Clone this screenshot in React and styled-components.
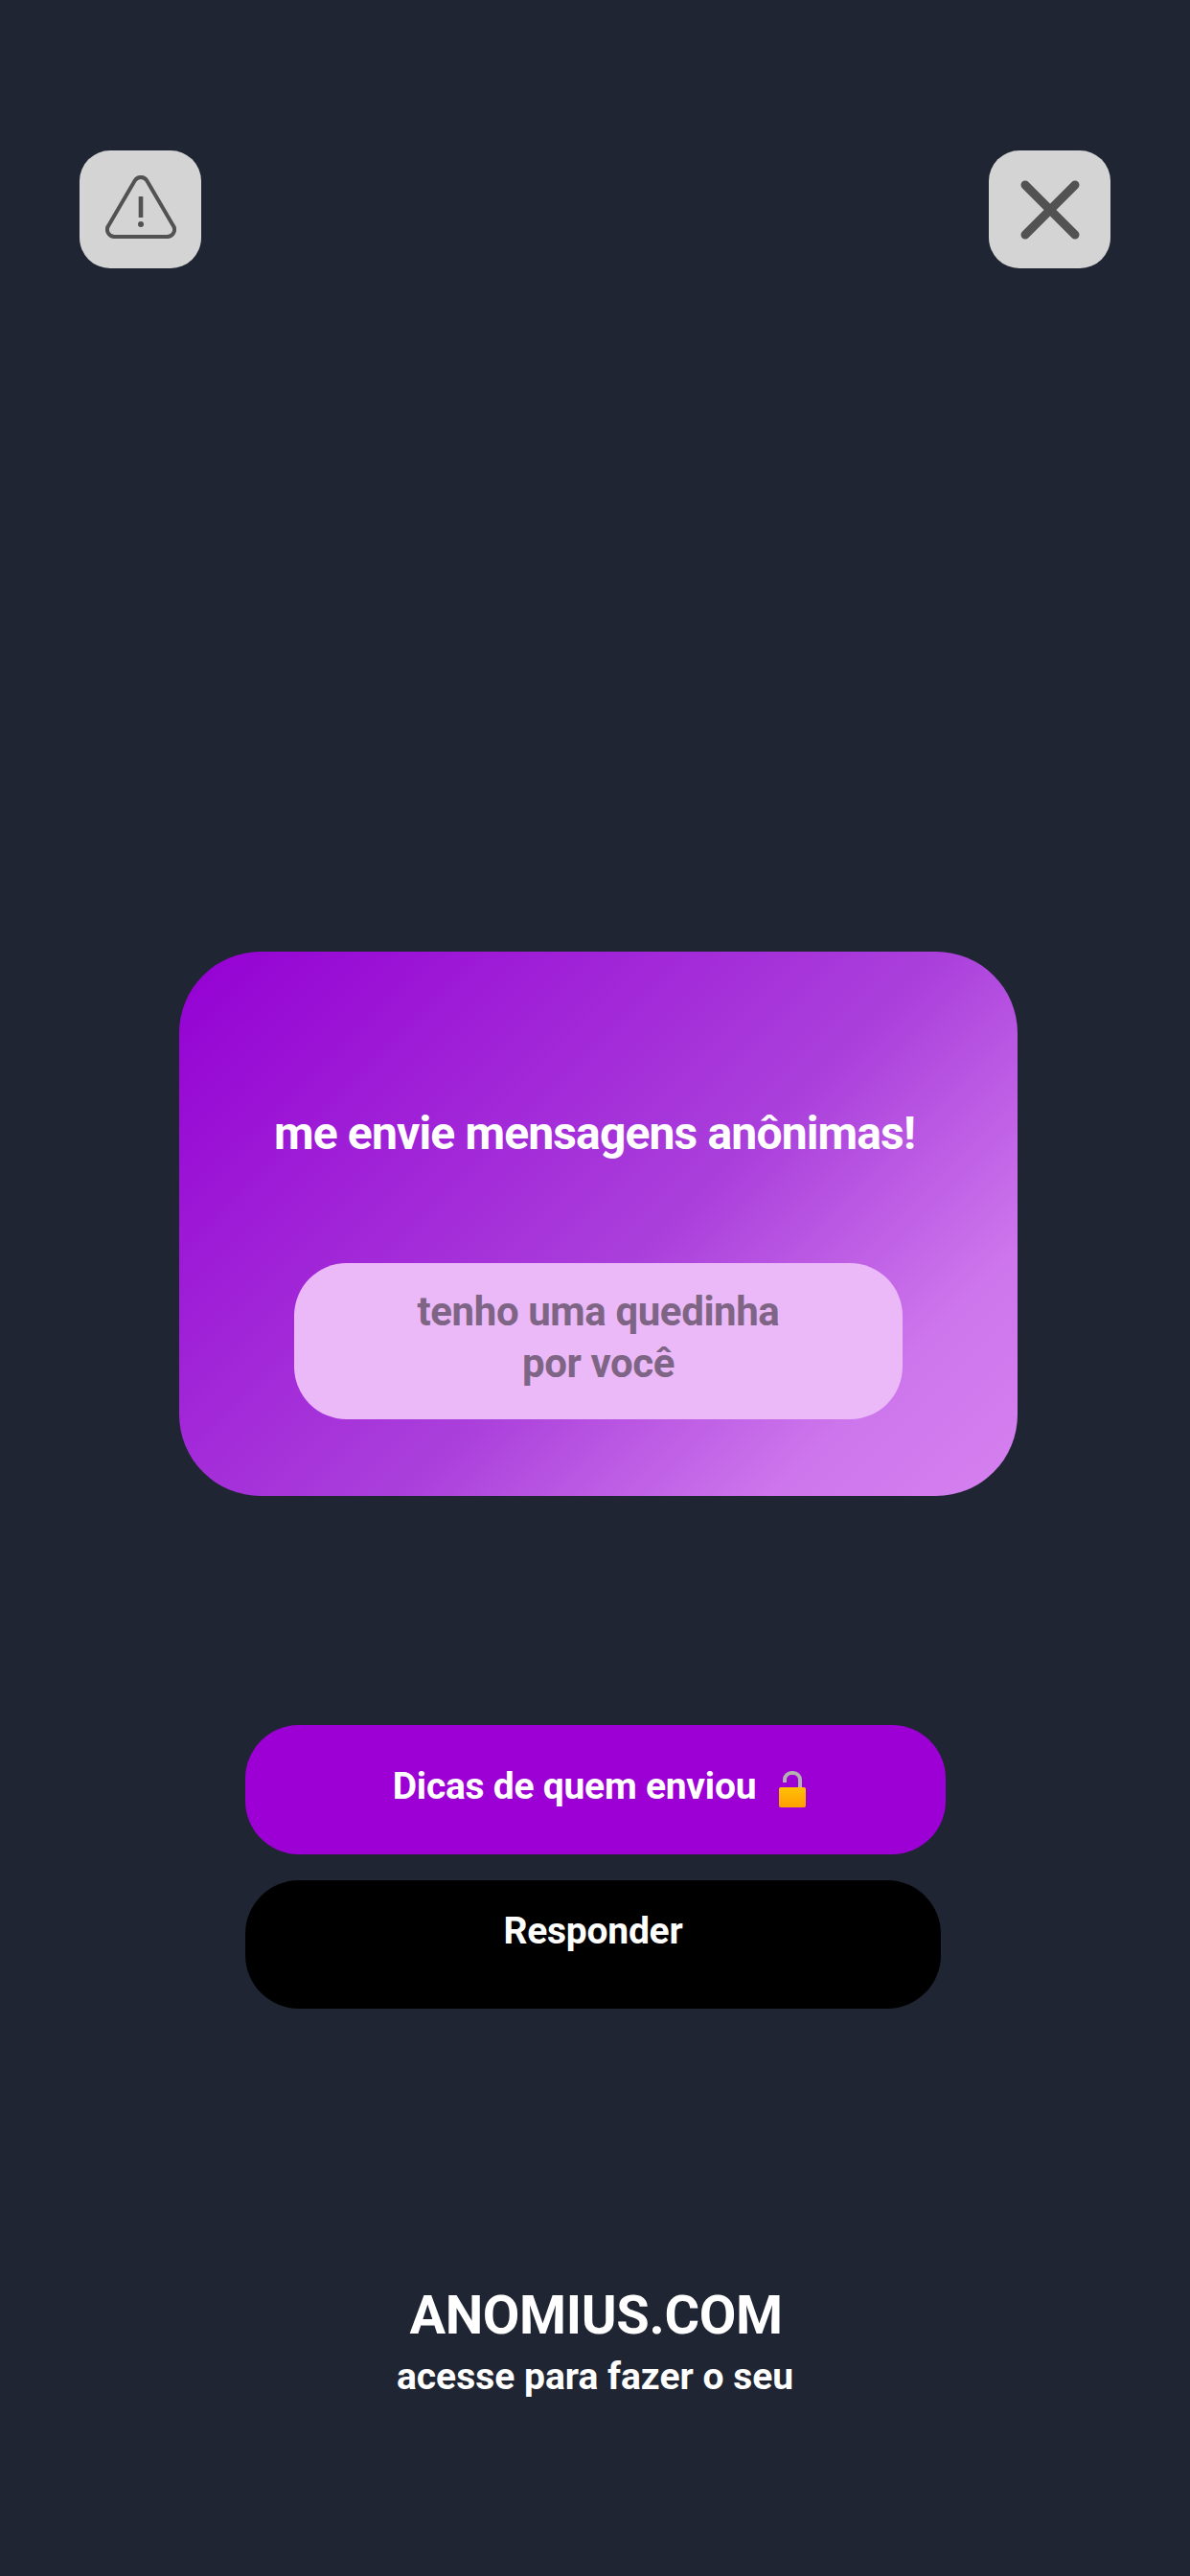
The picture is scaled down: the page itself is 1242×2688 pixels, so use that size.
import React from 'react';
import styled, { createGlobalStyle } from 'styled-components';

const GlobalStyle = createGlobalStyle`
  html, body {
    margin: 0;
    padding: 0;
    background: #1f2532;
  }
`;

const Page = styled.div`
  width: 1242px;
  height: 2688px;
  background: #1f2532;
  font-family: Roboto, "Liberation Sans", sans-serif;
  font-weight: 700;
  color: #fff;
  display: flex;
  flex-direction: column;
  align-items: flex-start;
  padding-top: 157px;
  box-sizing: border-box;
  overflow: hidden;
`;

const TopBar = styled.div`
  width: 100%;
  box-sizing: border-box;
  padding: 0 83px;
  display: flex;
  justify-content: space-between;
`;

const IconButton = styled.div`
  width: 127px;
  height: 123px;
  border-radius: 32px;
  background: #d4d4d4;
  display: flex;
  align-items: center;
  justify-content: center;
`;

const Card = styled.div`
  width: 875px;
  height: 568px;
  margin: 713px 0 0 187px;
  border-radius: 85px;
  background: linear-gradient(135deg, #9400d3 0%, #aa3fdb 55%, #cd75ec 82%, #d580f0 100%);
  display: flex;
  flex-direction: column;
  align-items: center;
  padding-top: 155px;
  box-sizing: border-box;
`;

const Title = styled.div`
  font-size: 48px;
  line-height: 70px;
  letter-spacing: -0.85px;
  white-space: nowrap;
  margin-right: 8px;
`;

const Prompt = styled.div`
  width: 635px;
  height: 163px;
  margin-top: 100px;
  border-radius: 55px;
  background: #ebb9f8;
  color: #7f6585;
  font-size: 42px;
  line-height: 54px;
  letter-spacing: -0.4px;
  text-align: center;
  padding-top: 24px;
  box-sizing: border-box;
`;

const Actions = styled.div`
  margin: 239px 0 0 256px;
  display: flex;
  flex-direction: column;
  align-items: flex-start;
  gap: 27px;
`;

const ActionButton = styled.div`
  width: ${p => p.$width}px;
  height: ${p => p.$height}px;
  border-radius: 56px;
  background: ${p => p.$bg};
  font-size: 39px;
  line-height: 50px;
  letter-spacing: -0.25px;
  display: flex;
  justify-content: center;
  gap: 24px;
  padding: ${p => p.$top}px 0 0 ${p => p.$left || 0}px;
  box-sizing: border-box;
`;

const Footer = styled.div`
  width: 100%;
  margin-top: 287px;
  display: flex;
  flex-direction: column;
  align-items: center;
`;

const Brand = styled.div`
  font-size: 56px;
  line-height: 66px;
  letter-spacing: -0.35px;
  margin-left: 2px;
`;

const Tagline = styled.div`
  font-size: 39px;
  line-height: 50px;
  margin-top: 6px;
`;

const LockSvg = styled.svg`
  margin-top: 9px;
`;

const WarningSvg = styled.svg`
  margin-bottom: 5px;
`;

const WarningIcon = () => (
  <WarningSvg width="74" height="66" viewBox="0 0 74 66" fill="none" stroke="#525252" strokeWidth="4" strokeLinejoin="round">
    <path d="M30.7 5.5 a7.3 7.3 0 0 1 12.6 0 L70.5 52 a7.5 7.5 0 0 1 -6.5 12 H10 a7.5 7.5 0 0 1 -6.5 -12 Z" />
    <path d="M37 22 V44" strokeWidth="4.6" />
    <circle cx="37" cy="51" r="3" fill="#525252" stroke="none" />
  </WarningSvg>
);

const CloseIcon = () => (
  <svg width="62" height="62" viewBox="0 0 62 62" fill="none" stroke="#525252" strokeWidth="9" strokeLinecap="round">
    <path d="M5 5 L57 57 M57 5 L5 57" />
  </svg>
);

const LockIcon = () => (
  <LockSvg width="28" height="38" viewBox="0 0 28 38">
    <defs>
      <linearGradient id="lockBody" x1="0" y1="0" x2="0" y2="1">
        <stop offset="0" stopColor="#ffc107" />
        <stop offset="1" stopColor="#ff9f00" />
      </linearGradient>
    </defs>
    <path d="M6 12 V9 a7 7 0 0 1 7 -7 h2 a7 7 0 0 1 7 7 V17" fill="none" stroke="#b4b2b0" strokeWidth="4" />
    <rect x="0" y="17" width="28" height="21" rx="2" fill="url(#lockBody)" />
  </LockSvg>
);

export default function App() {
  return (
    <Page>
      <GlobalStyle />
      <TopBar>
        <IconButton><WarningIcon /></IconButton>
        <IconButton><CloseIcon /></IconButton>
      </TopBar>
      <Card>
        <Title>me envie mensagens anônimas!</Title>
        <Prompt>tenho uma quedinha<br />por você</Prompt>
      </Card>
      <Actions>
        <ActionButton $width={731} $height={135} $bg="#9c00d4" $top={39} $left={8}>
          Dicas de quem enviou <LockIcon />
        </ActionButton>
        <ActionButton $width={726} $height={134} $bg="#000" $top={28}>
          Responder
        </ActionButton>
      </Actions>
      <Footer>
        <Brand>ANOMIUS.COM</Brand>
        <Tagline>acesse para fazer o seu</Tagline>
      </Footer>
    </Page>
  );
}
